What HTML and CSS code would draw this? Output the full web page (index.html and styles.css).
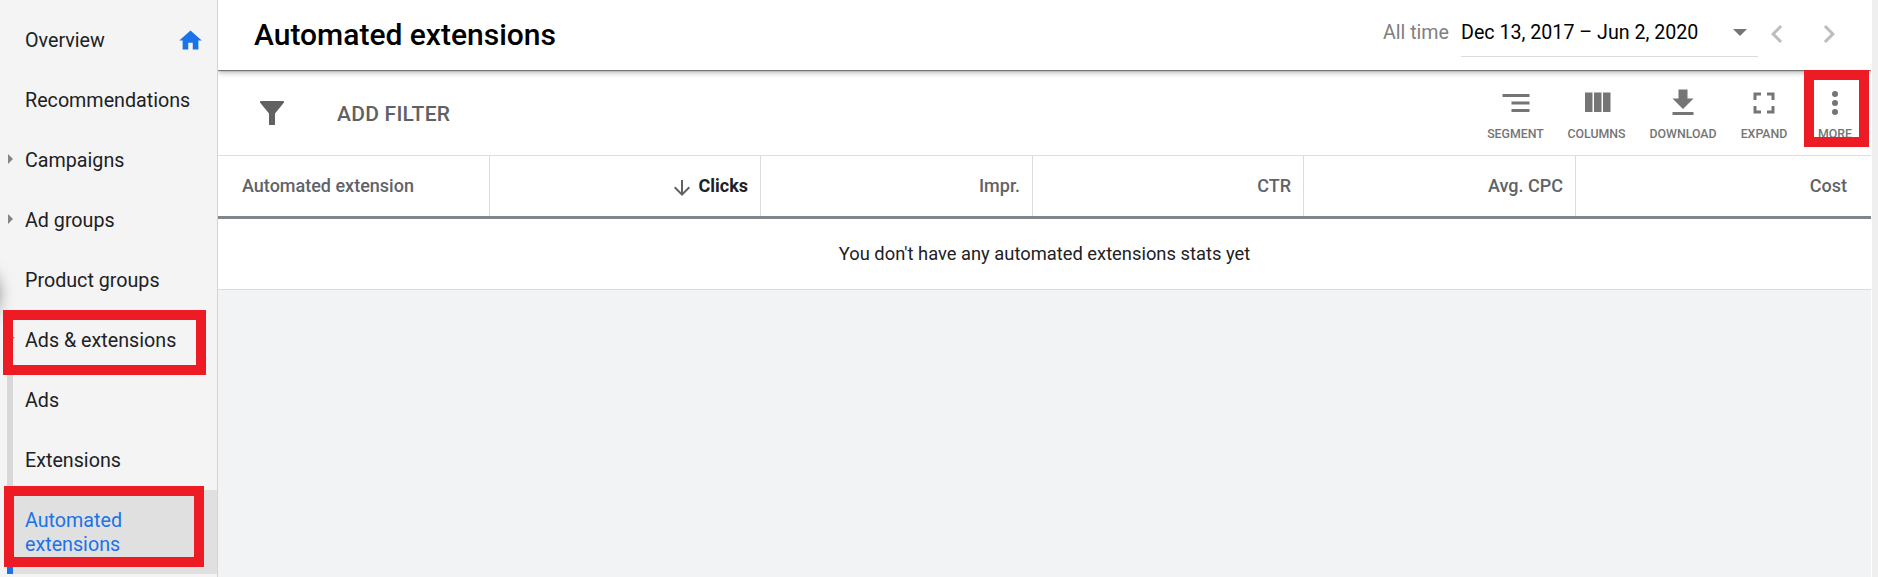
FILE: index.html
```html
<!DOCTYPE html>
<html lang="en">
<head>
<meta charset="utf-8">
<title>Automated extensions</title>
<link rel="stylesheet" href="styles.css">
</head>
<body>
<div class="app">
  <nav class="sidebar">
    <div class="drawer-handle"></div>
    <a class="nav-item"><span>Overview</span>
      <svg class="home" viewBox="0 0 24 24"><path d="M10 20v-6h4v6h5v-8h3L12 3 2 12h3v8z"/></svg>
    </a>
    <a class="nav-item">Recommendations</a>
    <a class="nav-item"><i class="arrow-right"></i>Campaigns</a>
    <a class="nav-item"><i class="arrow-right"></i>Ad groups</a>
    <a class="nav-item">Product groups</a>
    <a class="nav-item"><i class="arrow-down"></i>Ads &amp; extensions</a>
    <a class="nav-item child">Ads</a>
    <a class="nav-item child">Extensions</a>
    <a class="nav-item child selected">Automated extensions</a>
  </nav>

  <main class="main">
    <header class="header">
      <h1 class="title">Automated extensions</h1>
      <div class="dates">
        <span class="range-name">All time</span>
        <div class="range"><span>Dec 13, 2017 – Jun 2, 2020</span><i class="caret"></i></div>
        <svg class="icon chevron" viewBox="0 0 24 24"><path d="M15.41 16.59 10.83 12l4.58-4.59L14 6l-6 6 6 6z"/></svg>
        <svg class="icon chevron next" viewBox="0 0 24 24"><path d="M8.59 16.59 13.17 12 8.59 7.41 10 6l6 6-6 6z"/></svg>
      </div>
    </header>

    <section class="toolbar">
      <div class="filter">
        <svg class="funnel" viewBox="0 0 24 24"><path d="M.8 0H23.2Q24 0 24 .8V1.4L15 12.6V24H9V12.6L0 1.4V.8Q0 0 .8 0z"/></svg>
        <span class="add-filter">ADD FILTER</span>
      </div>
      <div class="tools">
        <div class="tool segment"><svg class="icon" viewBox="0 0 24 24"><path d="M3 6h18v2H3zM9 11h12v2H9zM9 16h12v2H9z"/></svg>SEGMENT</div>
        <div class="tool columns"><svg class="icon" viewBox="0 0 24 24"><path d="M10 18h5V5h-5v13zm-6 0h5V5H4v13zM16 5v13h5V5h-5z"/></svg>COLUMNS</div>
        <div class="tool download"><svg class="icon" viewBox="0 0 24 24"><path d="M19 9h-4V3H9v6H5l7 7 7-7zM5 18v2h14v-2H5z"/></svg>DOWNLOAD</div>
        <div class="tool expand"><svg class="icon" viewBox="0 0 24 24"><path d="M7 14H5v5h5v-2H7v-3zm-2-4h2V7h3V5H5v5zm12 7h-3v2h5v-5h-2v3zM14 5v2h3v3h2V5h-5z"/></svg>EXPAND</div>
        <div class="tool more"><svg class="icon" viewBox="0 0 24 24"><circle cx="12" cy="6" r="2"/><circle cx="12" cy="12" r="2"/><circle cx="12" cy="18" r="2"/></svg>MORE</div>
      </div>
    </section>

    <section class="table">
      <div class="head">
        <div class="cell name">Automated extension</div>
        <div class="cell sorted">
          <svg class="sort" viewBox="0 0 24 24"><path d="m20 12-1.41-1.41L13 16.17V4h-2v12.17l-5.58-5.59L4 12l8 8z"/></svg>Clicks
        </div>
        <div class="cell">Impr.</div>
        <div class="cell">CTR</div>
        <div class="cell">Avg. CPC</div>
        <div class="cell last">Cost</div>
      </div>
      <div class="empty">You don't have any automated extensions stats yet</div>
    </section>
  </main>

  <div class="callout callout-ads"></div>
  <div class="callout callout-automated"></div>
  <div class="callout callout-more"></div>
</div>
</body>
</html>
```
FILE: styles.css
```css
* { box-sizing: border-box; }

body {
  margin: 0;
  font-family: Roboto, sans-serif;
  color: #202124;
}

.app {
  position: relative;
  display: flex;
  width: 1878px;
  height: 577px;
  overflow: hidden;
  background: #efefef;
}

/* Sidebar */
.sidebar {
  position: relative;
  flex: none;
  width: 218px;
  padding-top: 10px;
  overflow: hidden;
  background: #f4f4f4;
  border-right: 1px solid #d4d4d4;
}

.drawer-handle {
  position: absolute;
  left: -50px;
  top: 266px;
  width: 46px;
  height: 50px;
  border-radius: 50%;
  box-shadow: 0 3px 16px 2px rgba(0, 0, 0, .5);
}

.nav-item {
  position: relative;
  display: flex;
  align-items: center;
  justify-content: space-between;
  height: 60px;
  padding: 2px 13px 0 25px;
  font-size: 19.7px;
  line-height: 24px;
}

.home { width: 27px; height: 27px; margin-bottom: 1px; fill: #1a73e8; }

.arrow-right,
.arrow-down {
  position: absolute;
  border: 5px solid transparent;
}

.arrow-right {
  left: 8px;
  top: 24px;
  border-left-color: #80868b;
  border-right: 0;
}

.arrow-down {
  left: 5px;
  top: 27px;
  border-top-color: #80868b;
  border-bottom: 0;
}

.child {
  margin-left: 7px;
  padding-left: 12px;
  border-left: 6px solid #d8d8d8;
}

.selected {
  height: 84px;
  padding-right: 50px;
  color: #1a73e8;
  background: #e0e0e0;
  border-left-color: #1a73e8;
}

/* Main column */
.main {
  flex: none;
  width: 1654px;
  overflow: hidden;
  background: #f1f3f4;
  border-right: 1px solid #fff;
}

.icon { display: block; flex: none; width: 36px; height: 36px; fill: currentColor; }

.header {
  position: relative;
  z-index: 1;
  display: flex;
  align-items: center;
  justify-content: space-between;
  height: 70px;
  padding: 0 24px 0 36px;
  background: #fff;
  box-shadow: 0 1px 1px rgba(0, 0, 0, .4), 0 2px 6px rgba(0, 0, 0, .35);
}

.title {
  margin: 0 0 2px;
  font-size: 30px;
  font-weight: 500;
  color: #000;
}

.dates {
  display: flex;
  align-items: center;
  height: 70px;
  font-size: 19.65px;
}

.range-name { margin: 0 12px 6px 0; color: #808080; }

.range {
  display: flex;
  align-items: center;
  justify-content: space-between;
  align-self: flex-start;
  width: 297px;
  height: 57px;
  margin-right: 1px;
  padding: 9px 11px 0 0;
  color: #000;
  border-bottom: 1px solid #dadce0;
}

.caret {
  margin-bottom: 1px;
  border: 7px solid transparent;
  border-top-color: #757575;
  border-bottom: 0;
}

.chevron { margin-bottom: 2px; color: #bdbdbd; }
.next { margin-left: 16px; }

/* Toolbar */
.toolbar {
  display: flex;
  justify-content: space-between;
  height: 86px;
  padding: 0 .5px 0 42px;
  background: #fff;
  border-bottom: 1px solid #dcdee0;
}

.filter {
  display: flex;
  align-items: center;
  gap: 53px;
  padding-top: 2px;
}

.funnel { width: 24px; height: 24px; margin-bottom: 2px; fill: #616161; }

.add-filter {
  font-size: 21px;
  font-weight: 500;
  letter-spacing: .25px;
  color: #616161;
}

.tools {
  display: flex;
  padding-top: 15px;
  color: #757575;
}

.tool {
  display: flex;
  flex-direction: column;
  align-items: center;
  gap: 5px;
  font-size: 12.35px;
  font-weight: 500;
  line-height: 16px;
}

.segment { width: 80px; }
.columns { width: 82px; }
.download { width: 91px; }
.expand { width: 71px; }
.more { width: 71px; }

/* Table */
.table { background: #fff; border-bottom: 1px solid #dadce0; }

.head {
  display: grid;
  grid-template-columns: 272px 271px 272px 271px 272px 1fr;
  height: 63px;
  border-bottom: 3px solid #80868b;
}

.cell {
  display: flex;
  align-items: center;
  justify-content: flex-end;
  padding: 0 12px 2px 0;
  font-size: 18px;
  font-weight: 500;
  color: #5f6368;
  border-right: 1px solid #dadce0;
}

.name { justify-content: flex-start; padding-left: 24px; }
.sorted { gap: 4px; font-weight: 700; color: #202124; }
.last { padding-right: 24px; border-right: 0; }
.sort { width: 24px; height: 24px; margin-top: 5px; fill: #616161; }

.empty {
  display: flex;
  align-items: center;
  justify-content: center;
  height: 70px;
  padding-bottom: 2px;
  font-size: 18.33px;
}

/* Red highlight frames */
.callout { position: absolute; z-index: 2; border: 10px solid #ed1c24; }
.callout-ads { left: 3px; top: 310px; width: 203px; height: 65px; }
.callout-automated { left: 4px; top: 486px; width: 200px; height: 81px; }
.callout-more { left: 1804px; top: 70px; width: 65px; height: 77px; }
```
